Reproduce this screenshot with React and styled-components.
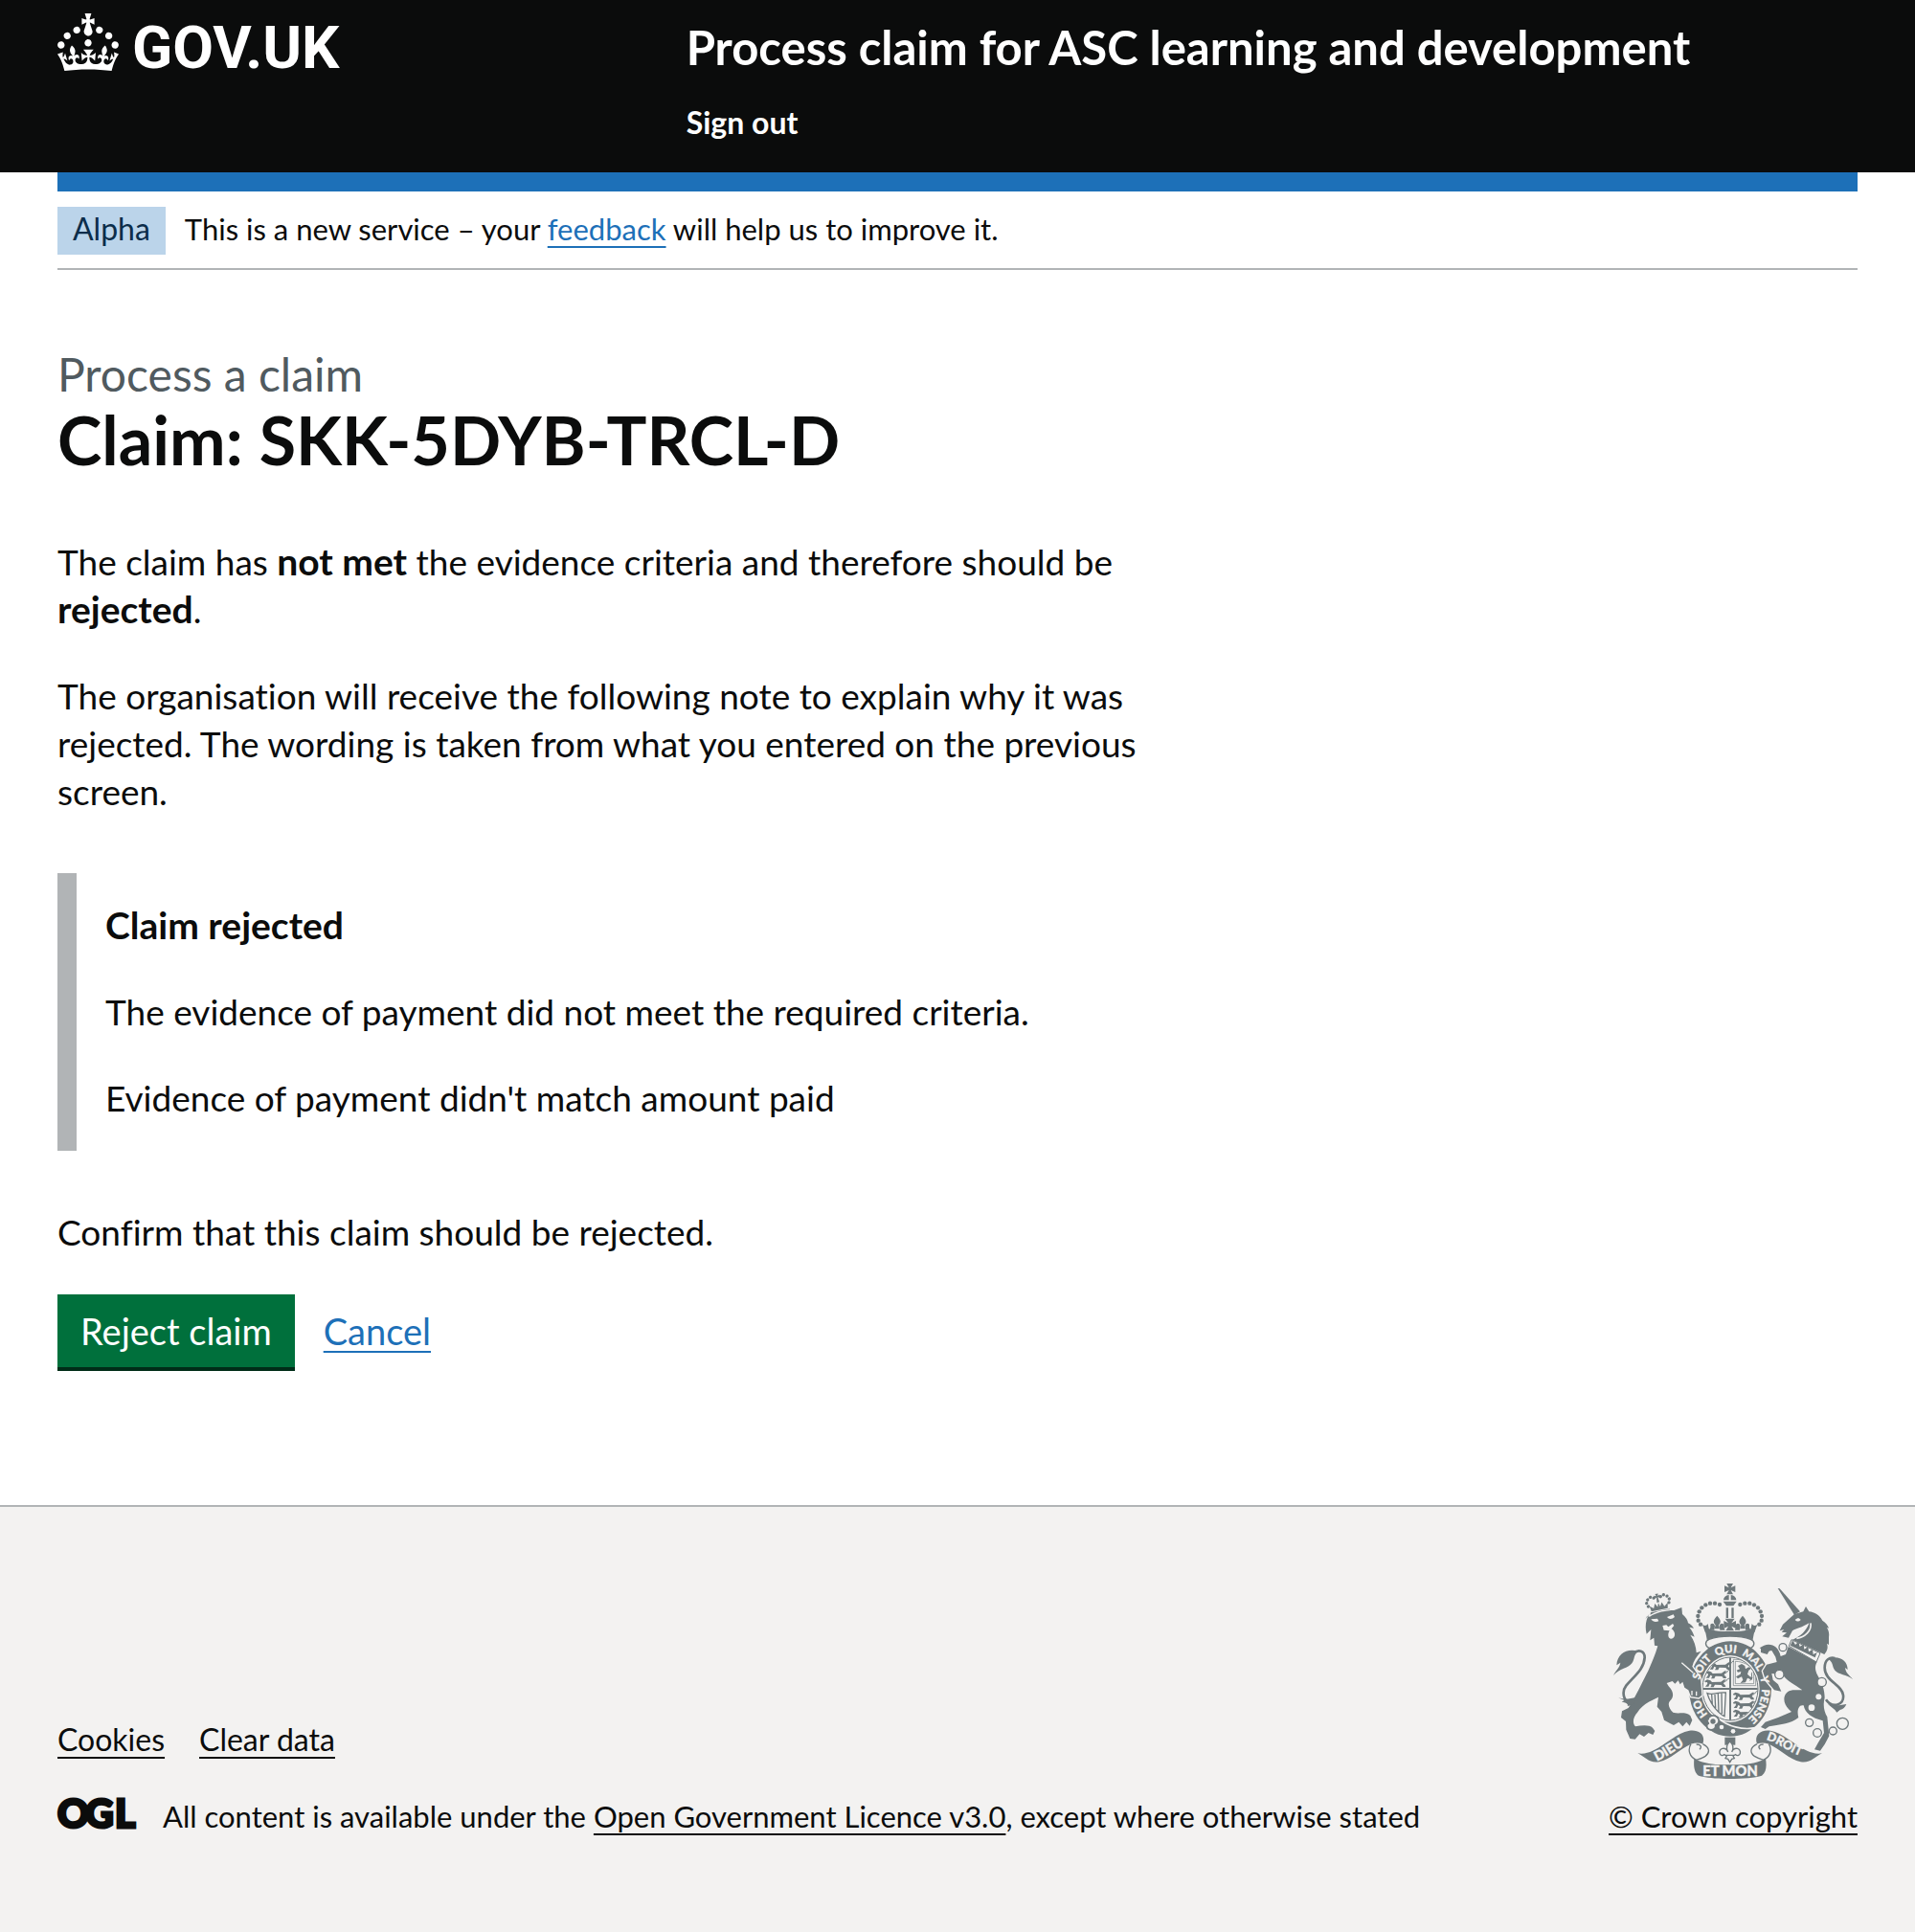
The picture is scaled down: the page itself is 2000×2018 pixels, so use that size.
import React from "react";
import styled, { createGlobalStyle } from "styled-components";

const ink = "#0b0c0c";
const blue = "#1d70b8";
const grey = "#b1b4b6";
const crestGrey = "#6e787b";
const paper = "#f3f2f1";

const GlobalStyle = createGlobalStyle`
  *, *::before, *::after { box-sizing: border-box; }
  body {
    margin: 0;
    background: #fff;
    color: ${ink};
    font-family: Lato, "Liberation Sans", sans-serif;
    font-variant-ligatures: none;
  }
`;

const Page = styled.div`
  min-height: 100vh;
  display: flex;
  flex-direction: column;
`;

const Container = styled.div`
  margin: 0 60px;
`;

const Header = styled.header`
  background: ${ink};
  color: #fff;
`;

const HeaderGrid = styled(Container)`
  display: grid;
  grid-template-columns: 1fr 2fr;
  padding: 14px 0 32px;
`;

const LogoLink = styled.a`
  display: inline-flex;
  align-items: flex-start;
  gap: 14px;
  color: #fff;
  text-decoration: none;
`;

const Wordmark = styled.span`
  font-family: Roboto, sans-serif;
  font-size: 62px;
  line-height: 72px;
  font-weight: 700;
`;

const HeaderContent = styled.div`
  padding: 6px 0 0 30px;
`;

const HeaderLink = styled.a`
  display: table;
  color: #fff;
  text-decoration: none;
  font-weight: 700;
  font-size: ${(p) => (p.$service ? 49 : 32)}px;
  line-height: ${(p) => (p.$service ? 58 : 40)}px;
  margin-bottom: ${(p) => (p.$service ? 30 : 0)}px;
`;

const BlueBar = styled.div`
  height: 20px;
  background: ${blue};
`;

const PhaseBanner = styled.div`
  display: flex;
  gap: 20px;
  padding: 16px 0 14px;
  border-bottom: 2px solid ${grey};
  font-size: 31px;
  line-height: 46px;
`;

const Tag = styled.strong`
  padding: 0 16px 4px;
  background: #bbd4ea;
  color: #0c2d4a;
  font-size: 32px;
  font-weight: 400;
`;

const Link = styled.a`
  color: ${(p) => (p.$plain ? ink : blue)};
  text-decoration: underline;
  text-decoration-thickness: 2px;
  text-underline-offset: 6px;
  text-decoration-skip-ink: none;
`;

const Main = styled.main`
  width: calc((100% + 60px) * 2 / 3);
  padding: 80px 60px 140px 0;
`;

const Caption = styled.span`
  display: block;
  color: #505a5f;
  font-size: 48px;
  line-height: 58px;
`;

const Heading = styled.h1`
  margin: 0 0 64px;
  font-size: 70px;
  line-height: 78px;
  font-weight: 700;
`;

const Body = styled.p`
  margin: 0 0 40px;
  font-size: 37px;
  line-height: 50px;
`;

const Strong = styled.strong`
  font-size: 39px;
  line-height: 40px;
`;

const Inset = styled.div`
  margin: 60px 0;
  padding: 30px;
  border-left: 20px solid ${grey};

  ${Body}:last-child { margin-bottom: 0; }
`;

const ButtonGroup = styled.div`
  display: flex;
  align-items: baseline;
  gap: 30px;
  font-size: 38px;
  line-height: 50px;
`;

const Button = styled.button`
  margin: 0 0 4px;
  padding: 13px 24px;
  border: 0;
  background: #00703c;
  color: #fff;
  box-shadow: 0 4px 0 #002d18;
  font: inherit;
`;

const Footer = styled.footer`
  flex: 1;
  border-top: 2px solid ${grey};
  background: ${paper};
`;

const FooterMeta = styled(Container)`
  display: flex;
  justify-content: space-between;
  align-items: flex-end;
  padding: 80px 0;
  font-size: 31px;
  line-height: 40px;
`;

const FooterLinks = styled.ul`
  display: flex;
  gap: 36px;
  margin: 0 0 40px;
  padding: 0;
  list-style: none;
  font-size: 32px;
`;

const Licence = styled.div`
  display: flex;
  align-items: flex-start;
  gap: 28px;
`;

const Copyright = styled.div`
  display: flex;
  flex-direction: column;
  align-items: center;
  gap: 19px;
`;

function Crown() {
  return (
    <svg width="64" height="60" viewBox="0 0 32 30" fill="currentColor" aria-hidden="true">
      <path d="M22.6 10.4c-1 .4-2-.1-2.4-1-.4-.9.1-2 1-2.4.9-.4 2 .1 2.4 1s-.1 2-1 2.4m-5.9 6.7c-.9.4-2-.1-2.4-1-.4-.9.1-2 1-2.4.9-.4 2 .1 2.4 1s-.1 2-1 2.4m10.8-3.7c-1 .4-2-.1-2.4-1-.4-.9.1-2 1-2.4.9-.4 2 .1 2.4 1s0 2-1 2.4m3.3 4.8c-1 .4-2-.1-2.4-1-.4-.9.1-2 1-2.4.9-.4 2 .1 2.4 1s-.1 2-1 2.4M17 4.7l2.3 1.2V2.5l-2.3.7-.2-.2.9-3h-3.4l.9 3-.2.2c-.1.1-2.3-.7-2.3-.7v3.4L15 4.7c.1.1.1.2.2.2l-1.3 4c-.1.2-.1.4-.1.6 0 1.1.8 2 1.9 2.2h.7c1-.2 1.9-1.1 1.9-2.1 0-.2 0-.4-.1-.6l-1.3-4c-.1-.2 0-.2.1-.3m-7.6 5.7c.9.4 2-.1 2.4-1 .4-.9-.1-2-1-2.4-.9-.4-2 .1-2.4 1s0 2 1 2.4m-5 3c.9.4 2-.1 2.4-1 .4-.9-.1-2-1-2.4-.9-.4-2 .1-2.4 1s.1 2 1 2.4m-3.2 4.8c.9.4 2-.1 2.4-1 .4-.9-.1-2-1-2.4-.9-.4-2 .1-2.4 1s0 2 1 2.4m14.8 11c4.4 0 8.6.3 12.3.8 1.1-4.5 2.4-7 3.7-8.8l-2.5-.9c.2 1.3.3 1.9 0 2.7-.4-.4-.8-1.1-1.1-2.3l-1.2 4c.7-.5 1.3-.8 2-.9-1.1 2.5-2.6 3.1-3.5 3-1.1-.2-1.7-1.2-1.5-2.1.3-1.2 1.5-1.5 2.1-.1 1.1-2.3-.8-3-2-2.3 1.9-1.9 2.1-3.5.6-5.6-2.1 1.6-2.1 3.2-1.2 5.5-1.2-1.4-3.2-.6-2.5 1.6.9-1.4 2.1-.5 1.9.8-.2 1.1-1.7 2.1-3.5 1.9-2.7-.2-2.9-2.1-2.9-3.6.7-.1 1.9.5 2.9 1.9l.4-4.3c-1.1 1.1-2.1 1.4-3.2 1.4.4-1.2 2.1-3 2.1-3h-5.4s1.7 1.9 2.1 3c-1.1 0-2.1-.2-3.2-1.4l.4 4.3c1-1.4 2.2-2 2.9-1.9-.1 1.5-.2 3.4-2.9 3.6-1.9.2-3.4-.8-3.5-1.9-.2-1.3 1-2.2 1.9-.8.7-2.3-1.2-3-2.5-1.6.9-2.2.9-3.9-1.2-5.5-1.5 2-1.3 3.7.6 5.6-1.2-.7-3.1 0-2 2.3.6-1.4 1.8-1.1 2.1.1.2.9-.3 1.9-1.5 2.1-.9.2-2.4-.5-3.5-3 .6 0 1.2.3 2 .9l-1.2-4c-.3 1.1-.7 1.9-1.1 2.3-.3-.8-.2-1.4 0-2.7l-2.9.9C1.3 23 2.6 25.5 3.7 30c3.7-.5 7.9-.8 12.3-.8z" />
    </svg>
  );
}

function OglLogo() {
  return (
    <svg width="82" height="34" viewBox="0 0 82 34" overflow="visible" role="img" aria-label="Open Government Licence">
      <text
        x="0 29 60"
        y="32"
        fill={ink}
        stroke={ink}
        strokeWidth="3"
        fontFamily="Lato, sans-serif"
        fontSize="41"
        fontWeight="900"
      >
        OGL
      </text>
    </svg>
  );
}

const archBeads = [
  [405, 138], [390, 134], [375, 134], [361, 139], [349, 148],
  [341, 160], [337, 174], [338, 188], [345, 200],
];

const lionCrownBeads = [
  [180, 138], [177, 127], [182, 117], [192, 111], [202, 115],
  [224, 115], [234, 111], [244, 117], [249, 127], [246, 138],
];

/* One side of the royal crown; the other side is its mirror image. */
function CrownSide() {
  return (
    <g>
      {archBeads.map(([x, y]) => (
        <circle key={x} cx={x} cy={y} r="6.5" />
      ))}
      <path d="M397 173c-14 14-12 22-5 29l-3 12h16l-3-12c7-7 9-15-5-29z" />
      <path d="M376 200c6-6 13-2 14 6l-2 12h-16l4-8zM418 200c-6-6-13-2-14 6l2 12h16l-4-8z" />
      <path d="M350 198c4 8 14 8 18 0l4 20-12 8z" />
      <path d="M356 206c18 14 50 16 82 16v26c-30 0-56 3-72 10-1-20-6-34-10-52z" />
    </g>
  );
}

/* Heraldic lion walking to the left, 80 by 26. */
function SmallLion({ x, y }) {
  return (
    <g transform={`translate(${x} ${y})`}>
      <path d="M0 6l8-5 10 3 5 5 28-1 10-7 8 1-6 3-4 9 5 4 2 6h-9l-5-6-20-1-4 8h-10l4-8-6-3-4 9H2l7-9-1-5-6 1z" />
      <path d="M60 8C72 8 68-4 78-2" fill="none" stroke={crestGrey} strokeWidth="3" />
    </g>
  );
}

function RibbonSide() {
  return (
    <g>
      <path d="M148 604c20 3 32-2 47-8 45-21 75-57 115-63 30-4 52 12 42 42-10-4-22-5-37 0-36 15-63 48-100 56-30 5-45-16-67-27z" />
      <path
        d="M352 575c24 12 22 28 8 38-12 7-22 10-28 12-22-10-28-32-17-50M332 576c14 0 18 8 10 16"
        fill={paper}
        stroke={crestGrey}
        strokeWidth="4"
      />
    </g>
  );
}

function Crest() {
  return (
    <svg width="250" height="204" viewBox="72 72 750 612" fill={crestGrey} aria-hidden="true">
      <defs>
        <path id="garter-line" d="M438 515A99 113 0 0 1 438 289A99 113 0 0 1 438 515" />
        <path id="ribbon-left" d="M208 629C250 611 280 581 330 563" />
        <path id="ribbon-right" d="M550 562C590 572 622 603 680 620" />
        <clipPath id="shield">
          <ellipse cx="438" cy="402" rx="86" ry="98" />
        </clipPath>
      </defs>

      {/* crown */}
      <path d="M427 72h20l-7 13 14-6v20l-14-6 7 13h-20l7-13-14 6V79l14 6z" />
      <path d="M417 124a20 17 0 0 1 17-16v16zM440 108a20 17 0 0 1 17 16h-17zM416 128h42l-10 14h-22z" />
      <path d="M425 148h7v32h-7zM442 148h7v32h-7z" />
      <path d="M422 182h30l-10 14 14-7v24l-14-7 8 14h-26l8-14-14 7v-24l14 7z" />
      <CrownSide />
      <g transform="matrix(-1 0 0 1 874 0)">
        <CrownSide />
      </g>
      <path
        d="M372 247c36-13 96-13 130 0 14 6 14 20 0 28-36-18-96-18-130 0-14-8-14-22 0-28z"
        fill={paper}
        stroke={crestGrey}
        strokeWidth="4"
      />

      {/* garter and shield */}
      <ellipse cx="438" cy="402" rx="129" ry="149" />
      <ellipse cx="438" cy="402" rx="92" ry="105" fill={paper} />
      <ellipse cx="438" cy="402" rx="87" ry="99" fill="none" stroke={crestGrey} strokeWidth="3" />
      <g clipPath="url(#shield)">
        <path d="M435 300h6v210h-6zM348 399h180v6H348z" />
        <SmallLion x={372} y={318} />
        <SmallLion x={360} y={345} />
        <SmallLion x={358} y={372} />
        <SmallLion x={447} y={412} />
        <SmallLion x={447} y={439} />
        <SmallLion x={447} y={466} />
        <path
          d="M448 310v82h70v-50c-12-20-40-34-70-32zM454 316v70h58v-42c-12-16-34-28-58-28z"
          fill="none"
          stroke={crestGrey}
          strokeWidth="2"
        />
        <path d="M462 330l12-6 10 6 2 10 10-6 8 4-8 6-4 12 8 8 8 2-2 8-14-6-6 14-16 2 8-10-4-10-12 6-6-6 14-8 2-8-10 2-4-6 10-4z" />
        <path d="M499 376c14-6 2-18 8-26" fill="none" stroke={crestGrey} strokeWidth="3" />
        <path
          d="M366 416c20 8 34-6 58-2l-4 74c-14-6-44-34-54-72zM380 420l2 30M390 420l2 42M400 417l2 56M411 416l1 64"
          fill="none"
          stroke={crestGrey}
          strokeWidth="4"
        />
      </g>
      <path d="M400 494c30 26 76 38 118 30" fill="none" stroke={paper} strokeWidth="5" />
      <circle cx="411" cy="522" r="7" fill={paper} />
      <circle cx="447" cy="535" r="7" fill={paper} />
      <path
        d="M368 500c2-14 18-18 28-10 12 10 6 22-4 26 2 10-8 16-18 14-12-4-12-18-2-20"
        fill={paper}
        stroke={crestGrey}
        strokeWidth="5"
      />
      <circle cx="384" cy="504" r="8" />

      {/* lion */}
      <g transform="rotate(-11 212 135)">
        <path d="M184 158h60l4 10h-68z" />
        <path d="M187 155l-3-17 12 9 6-14 7 12 4-12 4 12 7-12 6 14 12-9-3 17z" />
        <path d="M208 104h10l-3 7 7-3v10l-7-3 2 16h-8l2-16-7 3v-10l7 3z" />
        {lionCrownBeads.map(([x, y]) => (
          <circle key={x} cx={x} cy={y} r="5" />
        ))}
      </g>
      <path
        d="M172 184l5-9 9 1c20-14 55-20 76-20l24-9 2 21c12 10 17 18 18 28 8 3 14 9 18 16l-14-3c8 10 13 20 16 30l-13-6c12 18 18 36 19 56l15-5c-14 16-24 30-28 48l26 38 4 52-10 8-24-4-8-20-12-8-6-18-8 8-6-12-10 10-8-8-18 6 6 10c16 16 18 34 4 46-8 10-2 24 10 36 18 6 38-4 54 10l6 14-8 18-10-12-12 14-12-14-16 10-12-6-18-10-8-26-14-16 4-30c-20 10-48 20-66 48-14 16-16 34-6 44 20-4 44-6 54 4l7 10-6 12-14-6-14 12-14-8-14 16-16-2-12-28-1-26-15-12 3-20 20-10c26-40 48-90 62-116 12-28 22-50 30-78l-10-2-2-24-12 8 3-34-14 14c-6-24-2-44 8-62z"
        stroke={paper}
        strokeWidth="8"
        paintOrder="stroke"
      />
      <path d="M190 184c6 8 14 10 24 6l-4-8zM240 177c6 8 16 8 24 0l-4-8zM226 204l12-2 6 6 14-10 4 6-8 10c12 8 14 24 4 30-14 6-18-12-10-24l-18-2z" fill={paper} />
      <path d="M286 320l36 32M318 422v-14M332 424v-14" fill="none" stroke={paper} strokeWidth="4" />
      <path d="M140 450c-40 0-42-40-28-58 22-28 56-50 58-88 0-22-20-26-34-14" fill="none" stroke={crestGrey} strokeWidth="8" />
      <path d="M150 284c-34-10-66 6-68 44l12-8c-2 16-14 22-22 40 20-22 46-22 58-38 10-14 4-26 20-38z" />
      <path d="M88 430c18 6 34 4 56-2-2 16-10 26-28 28 4-8-8-12-18-12l8-6z" />

      {/* unicorn */}
      <path d="M587 87l6 1 64 72-18 10z" />
      <path d="M639 168l28-8 8-16 10 16c18 2 32 10 42 28 10 6 18 16 20 24l-6-2c6 10 8 20 6 30v24l-6-4c4 12 2 22-8 34l-100-46c26-10 44-28 52-52-22 14-38 16-52 24l-12 22-20-4 14-12-16-2 8-8-14 4 10-20z" />
      <path d="M641 186c8-8 14-6 18 0-6 6-12 6-18 0z" fill={paper} />
      <path d="M690 196c4 24-18 44-44 48" fill="none" stroke={paper} strokeWidth="5" />
      <path
        d="M620 270l90 48c-8 14-6 26 2 42 14 24 22 44 22 70-6 24-2 44 8 60l6 60-14 26-14 20-18-4 12-22 18-30-4-38c-34-8-56-24-60-48-16-4-22 16-16 38-26 20-52 20-92 28l-12 8-14-6 14-16 40-14 42-18c-34-26-28-64 4-68h30c-24-18-46-26-62-48l-34-4 4 20 16 14 10 22-22-4-28-34-8-26 12-20 32-8-4-16-12-20-18 4-20-12 14-8c24-8 46 4 52 34l16-6z"
        stroke={paper}
        strokeWidth="8"
        paintOrder="stroke"
      />
      <path d="M630 248l90 42-12 28-86-50z" fill={paper} stroke={crestGrey} strokeWidth="3" />
      <path d="M626 266l8-16 8 14 10-10 4 16 12-8 2 16 12-8 2 16 12-8 2 16 12-6-6 16z" />
      <path d="M534 276c8-6 20-4 28 4l-8 14-20-6z" />
      <g fill={paper} stroke={crestGrey} strokeWidth="4">
        <circle cx="603" cy="272" r="12" />
        <circle cx="592" cy="357" r="14" />
        <circle cx="725" cy="381" r="14" />
        <circle cx="686" cy="508" r="12" />
        <circle cx="711" cy="540" r="13" />
        <circle cx="760" cy="534" r="12" />
        <circle cx="790" cy="511" r="18" />
      </g>
      <circle cx="715" cy="427" r="9" fill={paper} />
      <circle cx="693" cy="461" r="10" fill={paper} />
      <path d="M738 436c20 28 58 18 54-14-4-34-58-44-58-86 0-26 16-34 32-30" fill="none" stroke={crestGrey} strokeWidth="8" />
      <path d="M744 308c34-12 62 4 62 34l-8-6c2 16 12 22 24 36-20-16-44-14-56-28-10-14-4-26-22-36z" />
      <path d="M744 450c18 6 34 4 58 0-4 10-10 16-20 18l-10 8-6-8z" />

      {/* garter motto */}
      <g
        fill={paper}
        stroke={paper}
        strokeWidth="1"
        fontFamily="Lato, sans-serif"
        fontWeight="900"
        fontSize="34"
        textAnchor="middle"
      >
        <text><textPath href="#garter-line" startOffset="16%">HO</textPath></text>
        <text><textPath href="#garter-line" startOffset="35%">SOIT</textPath></text>
        <text><textPath href="#garter-line" startOffset="48%">QUI</textPath></text>
        <text><textPath href="#garter-line" startOffset="61%">MAL</textPath></text>
        <text><textPath href="#garter-line" startOffset="71%">Y</textPath></text>
        <text><textPath href="#garter-line" startOffset="83%">PENSE</textPath></text>
      </g>

      {/* motto ribbon */}
      <RibbonSide />
      <g transform="matrix(-1 0 0 1 874 0)">
        <RibbonSide />
      </g>
      <path d="M325 620c30 18 70 20 112 20s82-2 112-20c4 24 2 44-12 54-40 13-160 13-198 0-14-10-16-30-14-54z" />
      <g fill={paper} stroke={paper} strokeWidth="1" fontFamily="Lato, sans-serif" fontWeight="900">
        <text fontSize="42"><textPath href="#ribbon-left">DIEU</textPath></text>
        <text fontSize="38"><textPath href="#ribbon-right">DROIT</textPath></text>
        <text fontSize="44" x="438" y="675" textAnchor="middle">ET MON</text>
      </g>

      {/* fleur-de-lis */}
      <path d="M421 554h33v24h-33z" />
      <path
        d="M437 566c-14 14-12 24-6 34-8-18-30-12-26 4 2 8 10 8 14 4l8 4-4 8 8 2 6 10 6-10 8-2-4-8 8-4c4 4 12 4 14-4 4-16-18-22-26-4 6-10 8-20-6-34zM424 610h26"
        fill={paper}
        stroke={crestGrey}
        strokeWidth="4"
      />
    </svg>
  );
}

export default function App() {
  return (
    <>
      <GlobalStyle />
      <Page>
        <Header>
          <HeaderGrid>
            <div>
              <LogoLink href="#">
                <Crown />
                <Wordmark>GOV.UK</Wordmark>
              </LogoLink>
            </div>
            <HeaderContent>
              <HeaderLink href="#" $service>
                Process claim for ASC learning and development
              </HeaderLink>
              <nav aria-label="Menu">
                <HeaderLink href="#">Sign out</HeaderLink>
              </nav>
            </HeaderContent>
          </HeaderGrid>
        </Header>

        <Container>
          <BlueBar />
          <PhaseBanner>
            <Tag>Alpha</Tag>
            <span>
              This is a new service – your <Link href="#">feedback</Link> will help us to improve it.
            </span>
          </PhaseBanner>

          <Main>
            <Caption>Process a claim</Caption>
            <Heading>Claim: SKK-5DYB-TRCL-D</Heading>
            <Body>
              The claim has <Strong>not met</Strong> the evidence criteria and therefore should be{" "}
              <Strong>rejected</Strong>.
            </Body>
            <Body>
              The organisation will receive the following note to explain why it was rejected. The
              wording is taken from what you entered on the previous screen.
            </Body>
            <Inset>
              <Body>
                <Strong>Claim rejected</Strong>
              </Body>
              <Body>The evidence of payment did not meet the required criteria.</Body>
              <Body>Evidence of payment didn't match amount paid</Body>
            </Inset>
            <Body>Confirm that this claim should be rejected.</Body>
            <ButtonGroup>
              <Button type="button">Reject claim</Button>
              <Link href="#">Cancel</Link>
            </ButtonGroup>
          </Main>
        </Container>

        <Footer>
          <FooterMeta>
            <div>
              <FooterLinks>
                <li><Link href="#" $plain>Cookies</Link></li>
                <li><Link href="#" $plain>Clear data</Link></li>
              </FooterLinks>
              <Licence>
                <OglLogo />
                <span>
                  All content is available under the{" "}
                  <Link href="#" $plain>Open Government Licence v3.0</Link>, except where otherwise
                  stated
                </span>
              </Licence>
            </div>
            <Copyright>
              <Crest />
              <Link href="#" $plain>© Crown copyright</Link>
            </Copyright>
          </FooterMeta>
        </Footer>
      </Page>
    </>
  );
}
